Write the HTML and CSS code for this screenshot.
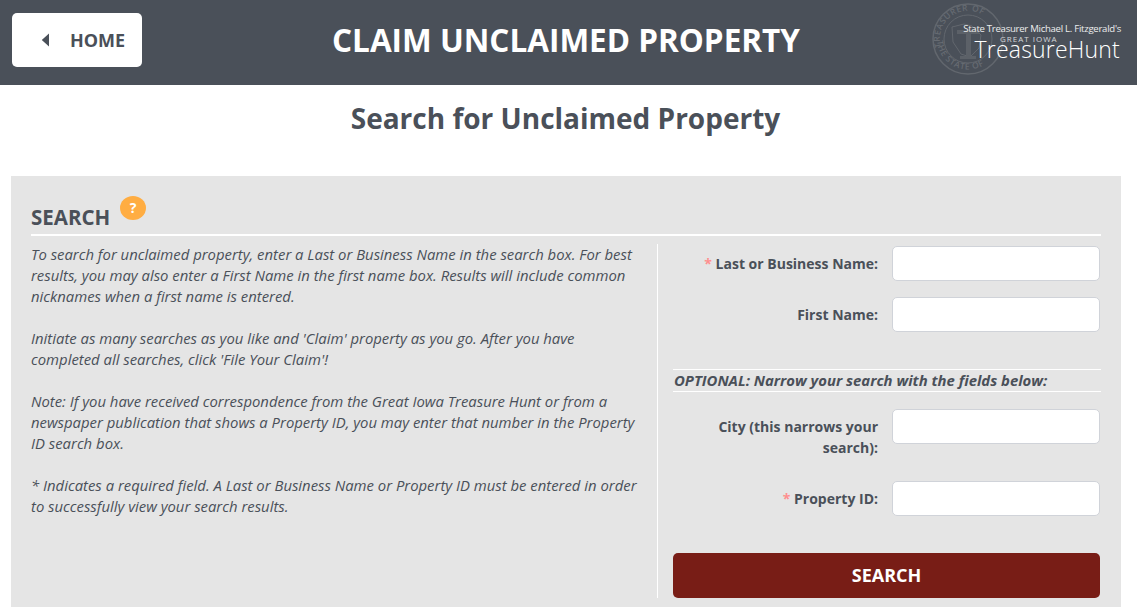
FILE: index.html
```html
<!DOCTYPE html>
<html lang="en">
<head>
<meta charset="utf-8">
<title>Claim Unclaimed Property</title>
<link rel="stylesheet" href="styles.css">
</head>
<body>
<header class="topbar">
  <a class="home" href="#">
    <svg class="home-arrow" width="9" height="14" viewBox="0 0 9 14"><path d="M8 0.5V13.5L0.8 7Z" fill="#4a5059"/></svg>
    <span>HOME</span>
  </a>
  <h1 class="title">CLAIM UNCLAIMED PROPERTY</h1>
  <div class="logo">
    <svg class="seal" width="72" height="72" viewBox="0 0 72 72">
      <defs>
        <path id="seal-top" d="M9 44A28 28 0 0 1 63 28"/>
        <path id="seal-bottom" d="M5 38A31 31 0 0 0 52 62"/>
      </defs>
      <g fill="none" stroke="#62676e">
        <circle cx="36" cy="36" r="35" stroke-width="1.5"/>
        <circle cx="36" cy="36" r="24" stroke-width="1"/>
        <path d="M20 24l12-3 8 2 9 9-2 13-9 9-9-3-8-12z" stroke-width="1"/>
      </g>
      <path d="M25 27h22v4h-8v22h5v3H28v-3h6V31h-9z" fill="#5c6168"/>
      <text class="seal-text"><textPath href="#seal-top">TREASURER OF</textPath></text>
      <text class="seal-text"><textPath href="#seal-bottom">THE STATE OF</textPath></text>
    </svg>
    <div class="logo-sub">State Treasurer Michael L. Fitzgerald's</div>
    <div class="logo-great">GREAT IOWA</div>
    <div class="logo-name">TreasureHunt</div>
  </div>
</header>

<h2 class="page-heading">Search for Unclaimed Property</h2>

<main class="panel">
  <div class="panel-head">
    <h3 class="panel-title">SEARCH</h3>
    <span class="help">?</span>
  </div>
  <div class="columns">
    <div class="intro">
      <p>To search for unclaimed property, enter a Last or Business Name in the search box. For best results, you may also enter a First Name in the first name box. Results will include common nicknames when a first name is entered.</p>
      <p>Initiate as many searches as you like and 'Claim' property as you go. After you have completed all searches, click 'File Your Claim'!</p>
      <p>Note: If you have received correspondence from the Great Iowa Treasure Hunt or from a newspaper publication that shows a Property ID, you may enter that number in the Property ID search box.</p>
      <p>* Indicates a required field. A Last or Business Name or Property ID must be entered in order to successfully view your search results.</p>
    </div>
    <form class="form">
      <div class="field">
        <label class="label"><span class="req">*</span> Last or Business Name:</label>
        <input class="input" type="text">
      </div>
      <div class="field">
        <label class="label">First Name:</label>
        <input class="input" type="text">
      </div>
      <div class="optional">OPTIONAL: Narrow your search with the fields below:</div>
      <div class="field field-city">
        <label class="label">City (this narrows your search):</label>
        <input class="input" type="text">
      </div>
      <div class="field">
        <label class="label"><span class="req">*</span> Property ID:</label>
        <input class="input" type="text">
      </div>
      <button class="submit" type="button">SEARCH</button>
    </form>
  </div>
</main>
</body>
</html>
```

FILE: styles.css
```css
* { box-sizing: border-box; }
html, body { margin: 0; height: 607px; overflow: hidden; }
body { background: #fff; color: #4a5059; font-family: "Open Sans", sans-serif; font-size: 14px; }

.topbar {
  height: 85px;
  background: #4a5059;
  display: flex;
  align-items: center;
  padding: 0 16px 5px 12px;
}
.home {
  width: 130px;
  height: 54px;
  background: #fff;
  border-radius: 5px;
  display: flex;
  align-items: center;
  padding-left: 29px;
  gap: 20px;
  color: #4a5059;
  font-size: 18px;
  font-weight: 700;
  text-decoration: none;
}
.title {
  flex: 1;
  margin: 0;
  padding-left: 58px;
  text-align: center;
  color: #fff;
  font-size: 31.5px;
  font-weight: 700;
  line-height: 44px;
}
.logo {
  width: 189px;
  height: 72px;
  margin-bottom: 2px;
  position: relative;
  color: #fff;
}
.seal { position: absolute; left: 0; top: 0; }
.seal-text {
  fill: #666b72;
  font-size: 8.5px;
  font-weight: 600;
  letter-spacing: .6px;
}
.logo-sub {
  position: absolute; right: 0; top: 21px;
  font-size: 9.6px; line-height: 10px; letter-spacing: -.28px; white-space: nowrap;
  color: #eceded;
}
.logo-great {
  position: absolute; left: 68px; top: 33px;
  font-size: 8px; line-height: 5px; letter-spacing: 1px; white-space: nowrap; color: #d5d7d9;
}
.logo-name {
  position: absolute; right: 1px; top: 38px;
  font-size: 23px; line-height: 16px; font-weight: 300; letter-spacing: .2px; white-space: nowrap;
}

.page-heading {
  margin: 0;
  height: 91px;
  padding: 13px 6px 0 0;
  text-align: center;
  font-size: 28px;
  line-height: 40px;
  font-weight: 700;
  color: #4a5059;
}

.panel {
  margin: 0 16px 0 11px;
  height: 431px;
  background: #e5e5e5;
  padding: 0 20px;
}
.panel-head {
  height: 60px;
  border-bottom: 2px solid #fff;
  display: flex;
}
.panel-title {
  margin: 27px 0 0;
  font-size: 20.5px;
  line-height: 28px;
  font-weight: 700;
}
.help {
  width: 26px;
  height: 24px;
  margin: 20px 0 0 10px;
  border-radius: 50%;
  background: #ffad42;
  color: #fff;
  font-size: 14px;
  font-weight: 700;
  line-height: 24px;
  text-align: center;
}
.columns {
  display: flex;
  margin-top: 8px;
  height: 354px;
}
.intro {
  width: 627px;
  border-right: 1px solid #fff;
  padding-right: 16px;
  font-style: italic;
  font-size: 14.87px;
  line-height: 21px;
}
.intro p { margin: 0 0 21px; }
.form {
  flex: 1;
  padding: 2px 0 0 15px;
}
.field {
  display: flex;
  align-items: flex-start;
  margin-bottom: 16px;
}
.field-city { margin-bottom: 23px; }
.label {
  width: 205px;
  margin-right: 14px;
  padding-top: 7px;
  text-align: right;
  font-weight: 700;
  line-height: 21px;
  font-size: 14px;
}
.field-city .label { padding-left: 30px; }
.req { color: #ff8f8f; }
.input {
  width: 208px;
  height: 35px;
  background: #fff;
  border: 1px solid #d0d3d9;
  border-radius: 5px;
  padding: 0 8px;
}
.optional {
  margin-top: 37px;
  height: 23px;
  margin-bottom: 17px;
  border-top: 1px solid #fff;
  border-bottom: 1px solid #fff;
  padding-left: 1px;
  font-style: italic;
  font-weight: 700;
  font-size: 14.87px;
  line-height: 20px;
  white-space: nowrap;
}
.submit {
  display: block;
  width: 427px;
  height: 45px;
  margin-top: 37px;
  padding: 0 0 2px;
  border: 0;
  border-radius: 5px;
  background: #781d16;
  color: #fff;
  font-family: inherit;
  font-size: 18px;
  font-weight: 700;
}
```
